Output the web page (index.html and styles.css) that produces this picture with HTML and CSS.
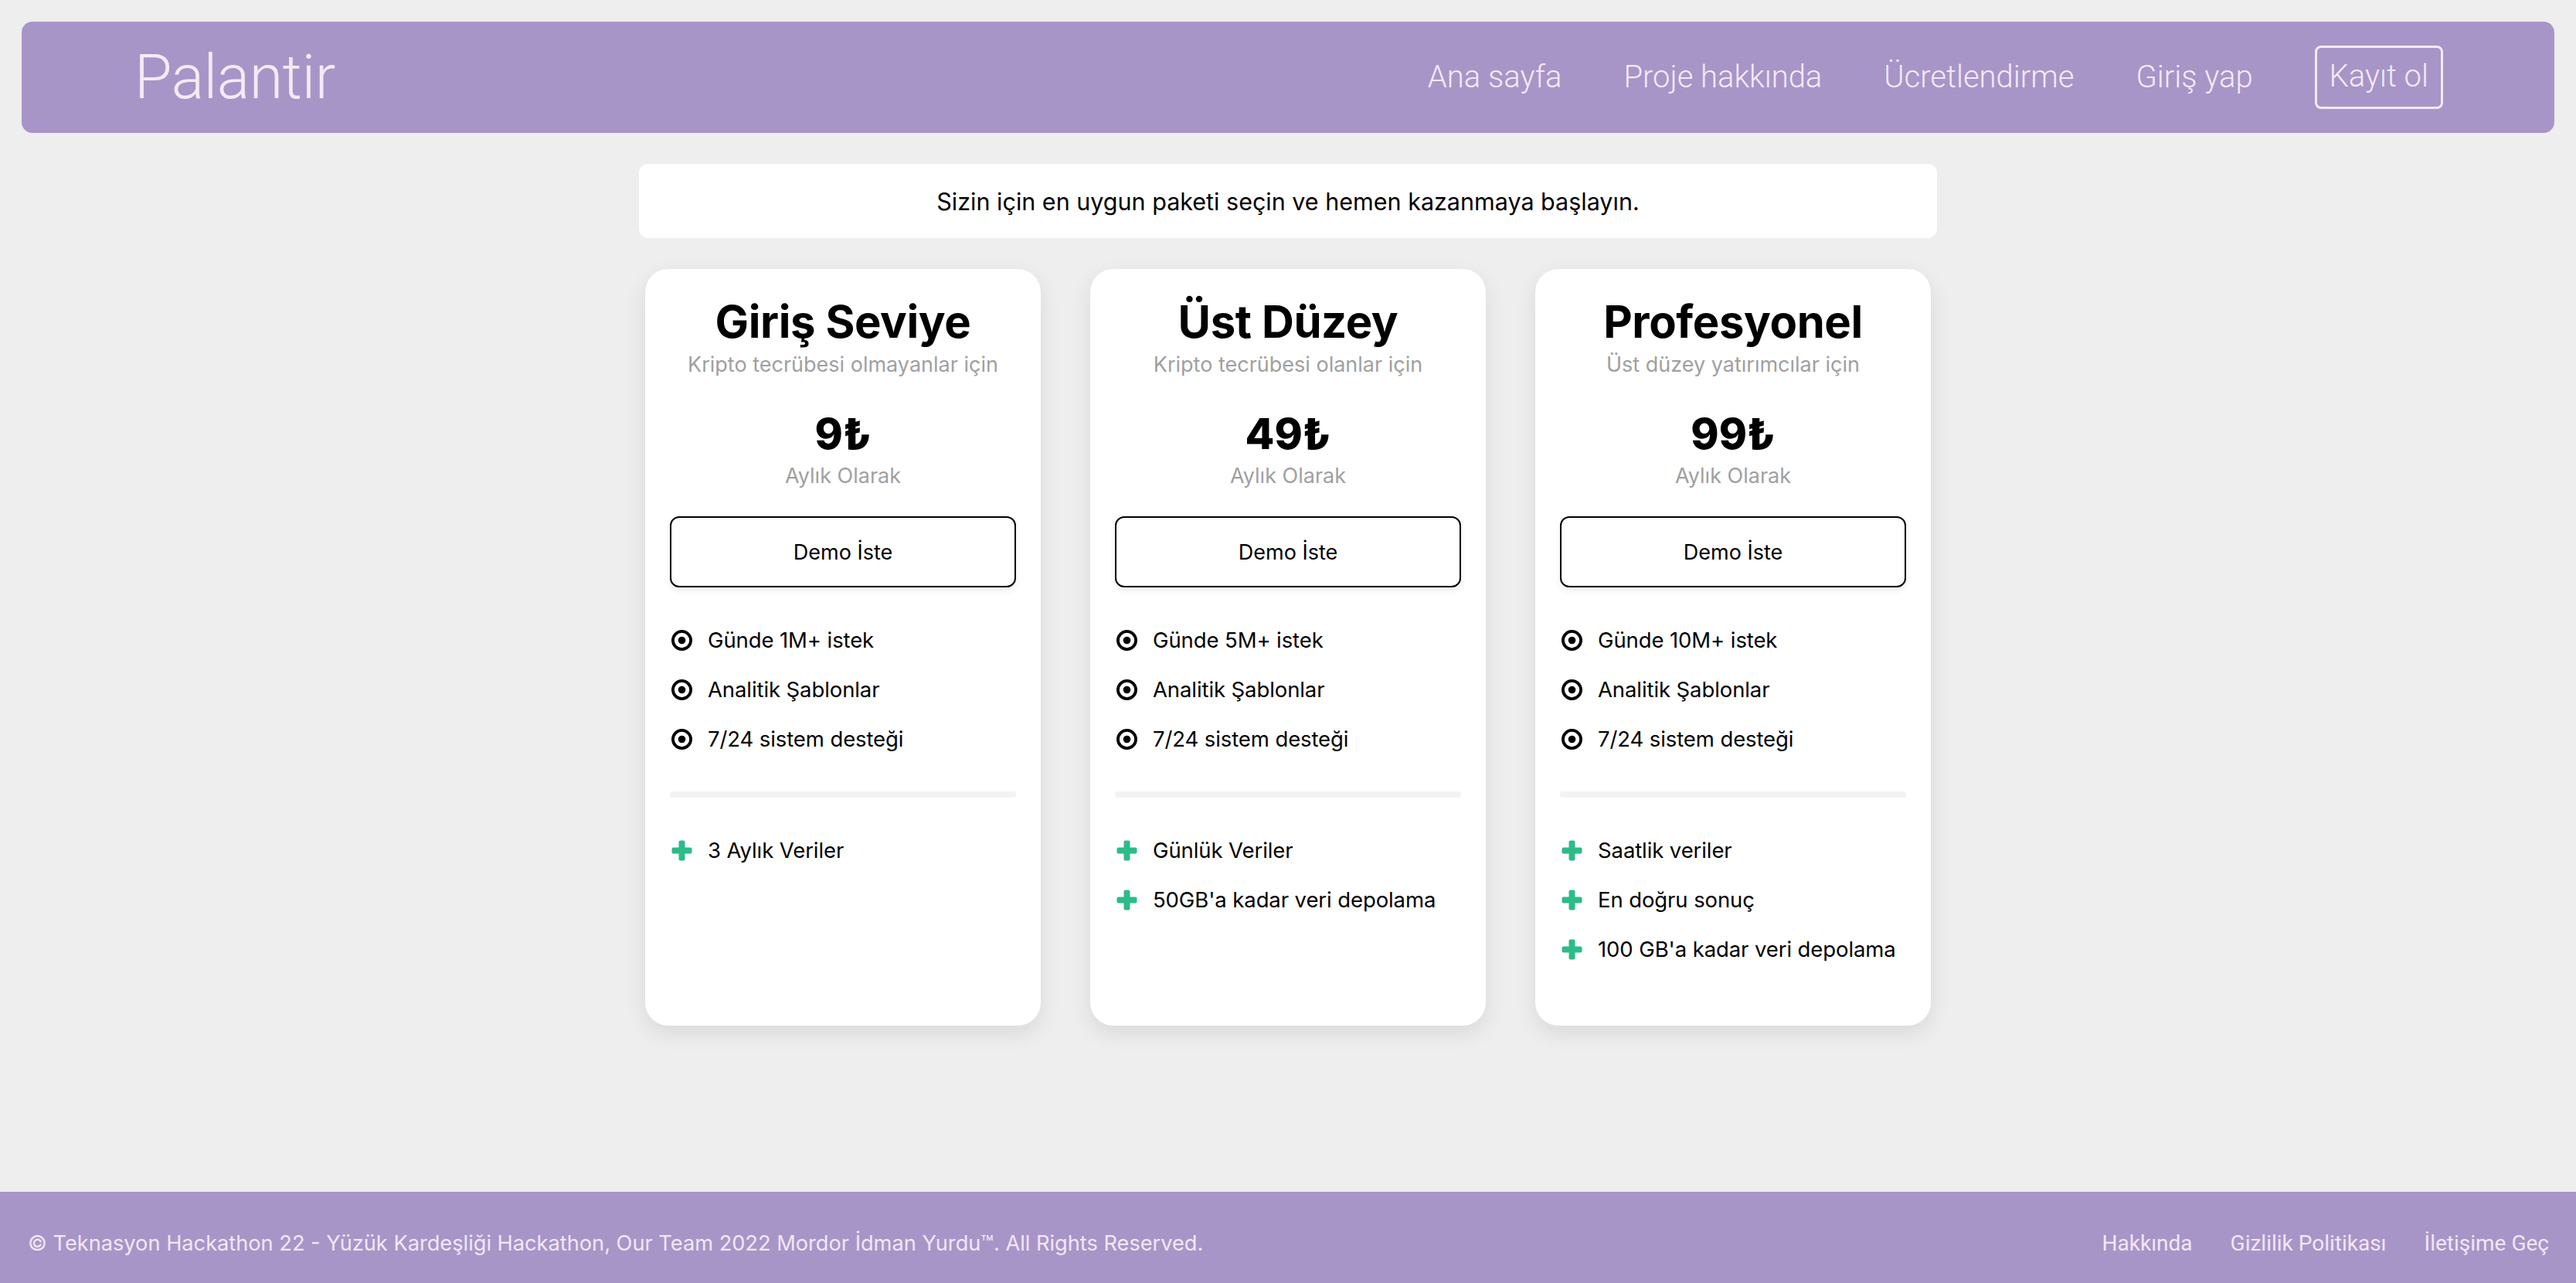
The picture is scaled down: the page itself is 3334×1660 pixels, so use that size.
FILE: index.html
```html
<!DOCTYPE html>
<html lang="tr">
<head>
<meta charset="utf-8">
<title>Palantir</title>
<link rel="stylesheet" href="styles.css">
</head>
<body>
<header class="topbar">
  <div class="logo">Palantir</div>
  <nav class="nav">
    <a class="nav-link" href="#">Ana sayfa</a>
    <a class="nav-link" href="#">Proje hakkında</a>
    <a class="nav-link" href="#">Ücretlendirme</a>
    <a class="nav-link" href="#">Giriş yap</a>
    <a class="nav-link nav-btn" href="#">Kayıt ol</a>
  </nav>
</header>

<main class="main">
  <div class="banner">Sizin için en uygun paketi seçin ve hemen kazanmaya başlayın.</div>

  <section class="cards">
    <article class="card">
      <h2 class="card-title">Giriş Seviye</h2>
      <p class="card-sub">Kripto tecrübesi olmayanlar için</p>
      <div class="price">9₺</div>
      <p class="period">Aylık Olarak</p>
      <button class="demo-btn">Demo İste</button>
      <ul class="features">
        <li class="feature"><svg class="ico" viewBox="0 0 27 27"><circle cx="13.5" cy="13.5" r="11.6" fill="none" stroke="#000" stroke-width="3.8"/><circle cx="13.5" cy="13.5" r="4.8" fill="#000"/></svg>Günde 1M+ istek</li>
        <li class="feature"><svg class="ico" viewBox="0 0 27 27"><circle cx="13.5" cy="13.5" r="11.6" fill="none" stroke="#000" stroke-width="3.8"/><circle cx="13.5" cy="13.5" r="4.8" fill="#000"/></svg>Analitik Şablonlar</li>
        <li class="feature"><svg class="ico" viewBox="0 0 27 27"><circle cx="13.5" cy="13.5" r="11.6" fill="none" stroke="#000" stroke-width="3.8"/><circle cx="13.5" cy="13.5" r="4.8" fill="#000"/></svg>7/24 sistem desteği</li>
      </ul>
      <div class="divider"></div>
      <ul class="features">
        <li class="feature"><svg class="ico" viewBox="0 0 27 27"><rect x="9.5" y="0.5" width="8" height="26" rx="2" fill="#2cbc88"/><rect x="0.5" y="9.5" width="26" height="8" rx="2" fill="#2cbc88"/></svg>3 Aylık Veriler</li>
      </ul>
    </article>

    <article class="card">
      <h2 class="card-title">Üst Düzey</h2>
      <p class="card-sub">Kripto tecrübesi olanlar için</p>
      <div class="price">49₺</div>
      <p class="period">Aylık Olarak</p>
      <button class="demo-btn">Demo İste</button>
      <ul class="features">
        <li class="feature"><svg class="ico" viewBox="0 0 27 27"><circle cx="13.5" cy="13.5" r="11.6" fill="none" stroke="#000" stroke-width="3.8"/><circle cx="13.5" cy="13.5" r="4.8" fill="#000"/></svg>Günde 5M+ istek</li>
        <li class="feature"><svg class="ico" viewBox="0 0 27 27"><circle cx="13.5" cy="13.5" r="11.6" fill="none" stroke="#000" stroke-width="3.8"/><circle cx="13.5" cy="13.5" r="4.8" fill="#000"/></svg>Analitik Şablonlar</li>
        <li class="feature"><svg class="ico" viewBox="0 0 27 27"><circle cx="13.5" cy="13.5" r="11.6" fill="none" stroke="#000" stroke-width="3.8"/><circle cx="13.5" cy="13.5" r="4.8" fill="#000"/></svg>7/24 sistem desteği</li>
      </ul>
      <div class="divider"></div>
      <ul class="features">
        <li class="feature"><svg class="ico" viewBox="0 0 27 27"><rect x="9.5" y="0.5" width="8" height="26" rx="2" fill="#2cbc88"/><rect x="0.5" y="9.5" width="26" height="8" rx="2" fill="#2cbc88"/></svg>Günlük Veriler</li>
        <li class="feature"><svg class="ico" viewBox="0 0 27 27"><rect x="9.5" y="0.5" width="8" height="26" rx="2" fill="#2cbc88"/><rect x="0.5" y="9.5" width="26" height="8" rx="2" fill="#2cbc88"/></svg>50GB'a kadar veri depolama</li>
      </ul>
    </article>

    <article class="card">
      <h2 class="card-title">Profesyonel</h2>
      <p class="card-sub">Üst düzey yatırımcılar için</p>
      <div class="price">99₺</div>
      <p class="period">Aylık Olarak</p>
      <button class="demo-btn">Demo İste</button>
      <ul class="features">
        <li class="feature"><svg class="ico" viewBox="0 0 27 27"><circle cx="13.5" cy="13.5" r="11.6" fill="none" stroke="#000" stroke-width="3.8"/><circle cx="13.5" cy="13.5" r="4.8" fill="#000"/></svg>Günde 10M+ istek</li>
        <li class="feature"><svg class="ico" viewBox="0 0 27 27"><circle cx="13.5" cy="13.5" r="11.6" fill="none" stroke="#000" stroke-width="3.8"/><circle cx="13.5" cy="13.5" r="4.8" fill="#000"/></svg>Analitik Şablonlar</li>
        <li class="feature"><svg class="ico" viewBox="0 0 27 27"><circle cx="13.5" cy="13.5" r="11.6" fill="none" stroke="#000" stroke-width="3.8"/><circle cx="13.5" cy="13.5" r="4.8" fill="#000"/></svg>7/24 sistem desteği</li>
      </ul>
      <div class="divider"></div>
      <ul class="features">
        <li class="feature"><svg class="ico" viewBox="0 0 27 27"><rect x="9.5" y="0.5" width="8" height="26" rx="2" fill="#2cbc88"/><rect x="0.5" y="9.5" width="26" height="8" rx="2" fill="#2cbc88"/></svg>Saatlik veriler</li>
        <li class="feature"><svg class="ico" viewBox="0 0 27 27"><rect x="9.5" y="0.5" width="8" height="26" rx="2" fill="#2cbc88"/><rect x="0.5" y="9.5" width="26" height="8" rx="2" fill="#2cbc88"/></svg>En doğru sonuç</li>
        <li class="feature"><svg class="ico" viewBox="0 0 27 27"><rect x="9.5" y="0.5" width="8" height="26" rx="2" fill="#2cbc88"/><rect x="0.5" y="9.5" width="26" height="8" rx="2" fill="#2cbc88"/></svg>100 GB'a kadar veri depolama</li>
      </ul>
    </article>
  </section>
</main>

<footer class="footer">
  <p class="copyright">© Teknasyon Hackathon 22 - Yüzük Kardeşliği Hackathon, Our Team 2022 Mordor İdman Yurdu™. All Rights Reserved.</p>
  <nav class="footer-links">
    <a class="footer-link" href="#">Hakkında</a>
    <a class="footer-link" href="#">Gizlilik Politikası</a>
    <a class="footer-link" href="#">İletişime Geç</a>
  </nav>
</footer>
</body>
</html>
```

FILE: styles.css
```css
* { box-sizing: border-box; }

html, body { height: 100%; }

body {
  margin: 0;
  background: #eeeeee;
  font-family: Roboto, "Liberation Sans", sans-serif;
  display: flex;
  flex-direction: column;
  min-height: 100vh;
}

.topbar {
  margin: 28px 28px 0;
  height: 144px;
  background: #a795c8;
  border-radius: 14px;
  display: flex;
  align-items: center;
  justify-content: space-between;
  padding: 0 144px 0 146px;
  color: #f6e9f6;
}

.logo {
  font-size: 79px;
  font-weight: 300;
  line-height: 1;
  letter-spacing: -0.5px;
}

.nav {
  display: flex;
  align-items: center;
  gap: 80px;
}

.nav-link {
  color: #f6e9f6;
  text-decoration: none;
  font-size: 40px;
  font-weight: 300;
  line-height: 1;
}

.nav-btn {
  border: 3px solid #f6e9f6;
  border-radius: 8px;
  padding: 17px 16px 19px;
}

.main {
  flex: 1;
  display: flex;
  flex-direction: column;
  align-items: center;
  padding-top: 40px;
}

.banner {
  width: 1680px;
  height: 96px;
  background: #ffffff;
  border-radius: 12px;
  display: flex;
  align-items: center;
  justify-content: center;
  font-family: Inter, "Noto Sans", sans-serif;
  font-size: 30.5px;
  color: #000;
}

.cards {
  margin-top: 40px;
  display: flex;
  gap: 64px;
}

.card {
  width: 512px;
  background: #ffffff;
  border-radius: 30px;
  box-shadow: 0 10px 28px rgba(0, 0, 0, 0.09);
  padding: 33px 32px 67px;
  display: flex;
  flex-direction: column;
  align-items: center;
  font-family: Inter, "Noto Sans", sans-serif;
}

.card-title {
  margin: 0;
  font-size: 58px;
  line-height: 70px;
  font-weight: 700;
  letter-spacing: -0.4px;
  color: #000;
}

.card-sub {
  margin: 4px 0 0;
  font-size: 27px;
  line-height: 34px;
  color: #a0a0a0;
}

.price {
  margin-top: 39px;
  font-size: 55px;
  line-height: 66px;
  font-weight: 800;
  color: #000;
}

.period {
  margin: 5px 0 0;
  font-size: 27px;
  line-height: 34px;
  color: #a0a0a0;
}

.demo-btn {
  margin-top: 35px;
  width: 448px;
  height: 92px;
  background: #fff;
  border: 2px solid #000;
  border-radius: 12px;
  box-shadow: 0 4px 8px rgba(0, 0, 0, 0.08);
  font-family: Inter, "Noto Sans", sans-serif;
  font-size: 27px;
  color: #000;
}

.features {
  list-style: none;
  margin: 0;
  padding: 0;
  width: 448px;
}

.demo-btn + .features { margin-top: 36px; }

.feature {
  display: flex;
  align-items: center;
  gap: 20px;
  height: 64px;
  font-size: 27.5px;
  letter-spacing: -0.1px;
  color: #000;
}

.ico {
  width: 27px;
  height: 27px;
  margin-left: 2px;
  flex: none;
}

.divider {
  width: 448px;
  height: 8px;
  border-radius: 4px;
  background: #f3f3f3;
  margin: 36px 0 36px;
}

.footer {
  height: 118px;
  background: #a795c8;
  display: flex;
  align-items: center;
  justify-content: space-between;
  padding: 14px 35px 0 36px;
  color: #f3e6f5;
  font-size: 28px;
}

.copyright {
  margin: 0;
  font-family: Inter, "Noto Sans", sans-serif;
  font-size: 27.2px;
}

.footer-links {
  display: flex;
  gap: 49px;
}

.footer-link {
  color: #f3e6f5;
  text-decoration: none;
}
```
